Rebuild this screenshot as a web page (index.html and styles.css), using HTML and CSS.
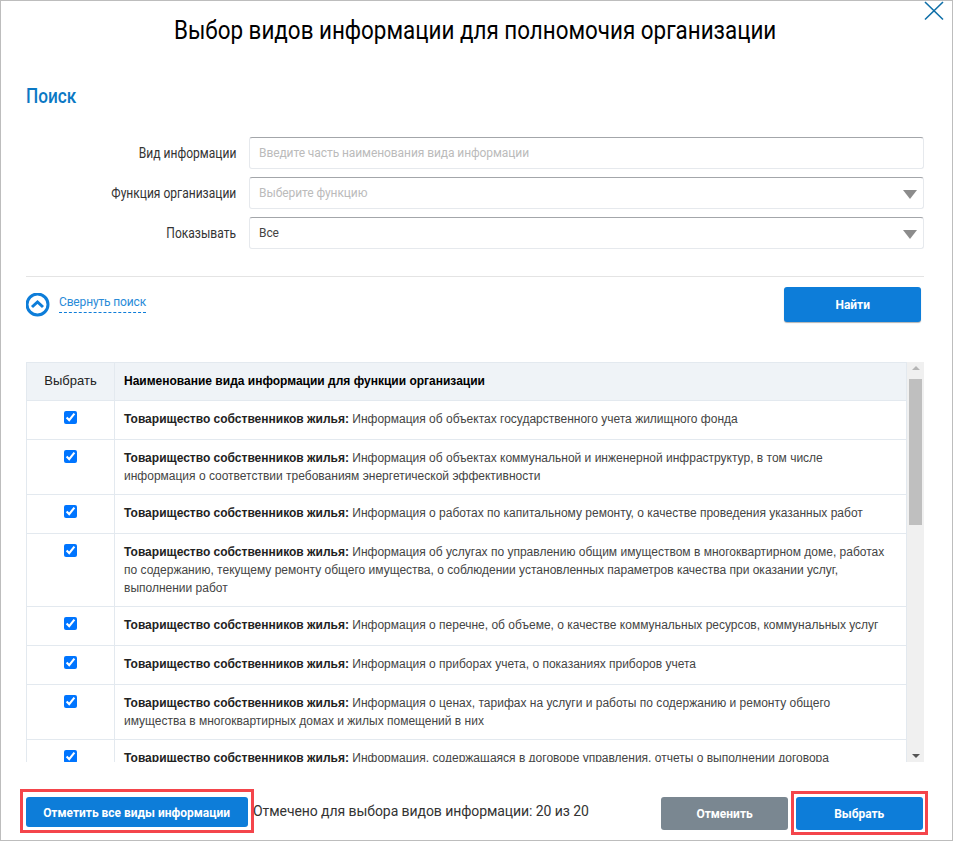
FILE: index.html
```html
<!DOCTYPE html>
<html lang="ru">
<head>
  <meta charset="UTF-8" />
  <title>Выбор видов информации</title>
  <link rel="stylesheet" href="styles.css">
</head>
<body>
  <section class="modal">
    <svg class="close" width="22" height="20" viewBox="0 0 22 20"><path d="M2 1l18 17.500M20 1L2 18.500" /></svg>
    <h1><span>Выбор видов информации для полномочия организации</span></h1>
    <h2><span>Поиск</span></h2>

    <!-- Поиск -->
    <div class="search">
      <div class="row">
        <div class="label"><span>Вид информации</span></div>
        <div class="field placeholder">Введите часть наименования вида информации</div>
      </div>
      <div class="row">
        <div class="label"><span>Функция организации</span></div>
        <div class="field placeholder">Выберите функцию<i class="arrow"></i></div>
      </div>
      <div class="row">
        <div class="label"><span>Показывать</span></div>
        <div class="field">Все<i class="arrow"></i></div>
      </div>
    </div>

    <div class="search-actions">
      <div class="toggle">
        <svg width="24" height="24" viewBox="0 0 24 24"><circle cx="11.500" cy="11.500" r="10.500" /><path d="M6 14l5.500-5 5.500 5" /></svg>
        <span class="toggle-text">Свернуть поиск</span>
      </div>
      <button class="btn btn-find"><span>Найти</span></button>
    </div>

    <!-- Таблица -->
    <div class="table-box">
      <table>
        <thead>
          <tr><th class="col-check">Выбрать</th><th>Наименование вида информации для функции организации</th></tr>
        </thead>
        <tbody>
          <tr><td class="col-check"><input type="checkbox" checked></td><td><b>Товарищество собственников жилья:</b> Информация об объектах государственного учета жилищного фонда</td></tr>
          <tr><td class="col-check"><input type="checkbox" checked></td><td><b>Товарищество собственников жилья:</b> Информация об объектах коммунальной и инженерной инфраструктур, в том числе<br>информация о соответствии требованиям энергетической эффективности</td></tr>
          <tr><td class="col-check"><input type="checkbox" checked></td><td><b>Товарищество собственников жилья:</b> Информация о работах по капитальному ремонту, о качестве проведения указанных работ</td></tr>
          <tr><td class="col-check"><input type="checkbox" checked></td><td><b>Товарищество собственников жилья:</b> Информация об услугах по управлению общим имуществом в многоквартирном доме, работах<br>по содержанию, текущему ремонту общего имущества, о соблюдении установленных параметров качества при оказании услуг,<br>выполнении работ</td></tr>
          <tr><td class="col-check"><input type="checkbox" checked></td><td><b>Товарищество собственников жилья:</b> Информация о перечне, об объеме, о качестве коммунальных ресурсов, коммунальных услуг</td></tr>
          <tr><td class="col-check"><input type="checkbox" checked></td><td><b>Товарищество собственников жилья:</b> Информация о приборах учета, о показаниях приборов учета</td></tr>
          <tr><td class="col-check"><input type="checkbox" checked></td><td><b>Товарищество собственников жилья:</b> Информация о ценах, тарифах на услуги и работы по содержанию и ремонту общего<br>имущества в многоквартирных домах и жилых помещений в них</td></tr>
          <tr><td class="col-check"><input type="checkbox" checked></td><td><b>Товарищество собственников жилья:</b> Информация, содержащаяся в договоре управления, отчеты о выполнении договора</td></tr>
        </tbody>
      </table>
      <div class="scrollbar">
        <i class="sb-up"></i>
        <div class="sb-thumb"></div>
        <i class="sb-down"></i>
      </div>
    </div>

    <!-- Низ окна -->
    <div class="bottom">
      <div class="marked marked-left"><button class="btn btn-all"><span>Отметить все виды информации</span></button></div>
      <span class="count">Отмечено для выбора видов информации: 20 из 20</span>
      <button class="btn btn-cancel"><span>Отменить</span></button>
      <div class="marked marked-right"><button class="btn btn-select"><span>Выбрать</span></button></div>
    </div>
  </section>
</body>
</html>
```

FILE: styles.css
```css
:root {
  --blue: #0d7dd9;
  --line: #e3e9ef;
}
* { box-sizing: border-box; }
body {
  margin: 0;
  font-family: Roboto, "Liberation Sans", sans-serif;
  background: #fff;
}
.modal {
  position: relative;
  width: 953px; height: 841px;
  border: 1px solid #bdbdbd;
  padding: 0 28px 0 25px;
  overflow: hidden;
}
.close {
  position: absolute; top: 0; right: 7px;
}
.close path { fill: none; stroke: #0f6fa8; stroke-width: 1.6; }

/* шрифт в макете уже обычного Roboto */
h1 span, h2 span, .label span, .btn span { display: inline-block; }
h1 {
  margin: 13px 0 0;
  font-size: 25px; line-height: 34px; font-weight: 400;
  text-align: center; color: #000;
}
h1 span { transform: scaleX(.896); white-space: nowrap; }
h2 {
  margin: 34px 0 0;
  font-size: 20px; line-height: 28px; font-weight: 500;
  color: #0b78c4;
}
h2 span { transform: scaleX(.86); transform-origin: left center; }
.search {
  margin-top: 27px;
  display: flex; flex-direction: column; gap: 8px;
  padding-bottom: 27px;
  border-bottom: 1px solid #e4e4e4;
}
.row { display: flex; align-items: center; gap: 13px; }
.label {
  width: 210px;
  text-align: right; font-size: 14px; color: #333;
}
.label span { transform: scaleX(.86); transform-origin: right center; white-space: nowrap; }
.field {
  position: relative;
  width: 675px; height: 32px;
  padding: 0 9px; line-height: 30px;
  border: 1px solid #e6e9ed; border-top: 1px solid #a3a6aa;
  border-radius: 3px;
  font-size: 12px; letter-spacing: -.08px; color: #444;
}
.placeholder { color: #bbb; }
.arrow {
  position: absolute; right: 6px; top: 12px;
  border: 6px solid transparent; border-bottom: 0;
  border-top: 9px solid #8c8c8c;
  border-left-width: 7px; border-right-width: 7px;
}
.search-actions {
  display: flex; justify-content: space-between; align-items: center;
  margin-top: 10px; padding-right: 3px;
}
.toggle { display: flex; align-items: center; gap: 9px; }
.toggle svg { fill: none; stroke: var(--blue); stroke-width: 3; }
.toggle-text {
  font-size: 12px; line-height: 15px; letter-spacing: -.15px; color: #2a8bd8;
  padding-bottom: 2px; margin-bottom: 1px;
  border-bottom: 1px dashed #0d7dd9;
}
.btn {
  border: 0; border-radius: 3px;
  background: var(--blue); color: #fff;
  font-family: inherit; font-size: 13px; font-weight: 700;
  padding: 0; flex: none;
}
.btn span { transform: scaleX(.92); white-space: nowrap; }
.btn-find { width: 137px; height: 35px; box-shadow: 0 1px 1px rgba(0,0,0,.3); }
.table-box {
  display: flex; align-items: flex-start;
  margin-top: 40px;
  width: 898px; height: 400px;
  overflow: hidden;
}
table {
  width: 881px; flex: none;
  border-collapse: collapse; table-layout: fixed;
  font-family: "Liberation Sans", sans-serif;
  font-size: 12px; line-height: 18px; color: #444;
}
th, td {
  border: 1px solid var(--line);
  padding: 9px 9px 9px 9px;
  text-align: left; vertical-align: top;
}
th { background: #eff3f7; color: #000; padding-top: 9px; padding-bottom: 10px; }
b { color: #222; }
.col-check { width: 88px; text-align: center; font-weight: 400; padding-left: 0; padding-right: 0; }
th.col-check { color: #222; font-size: 13px; }
td.col-check { padding-top: 10px; padding-bottom: 10px; }
input[type="checkbox"] { margin: 0; display: inline-block; vertical-align: top; }
.scrollbar {
  position: relative;
  width: 17px; height: 400px; flex: none;
  background: #f0f0f0;
}
.sb-thumb {
  position: absolute; left: 2px; top: 17px;
  width: 13px; height: 146px;
  background: #bfbfbf;
}
.sb-up, .sb-down {
  position: absolute; left: 5px;
  border: 4px solid transparent;
}
.sb-up { top: 4px; border-top: 0; border-bottom: 4px solid #b5b5b5; }
.sb-down { bottom: 4px; border-bottom: 0; border-top: 4px solid #555; }
.bottom {
  display: flex; align-items: flex-start;
  margin: 27px -6px 0;
}
.marked { border: 3px solid #f4454b; flex: none; }
.marked-left { padding: 5px 3px 3px; width: 234px; height: 44px; }
.marked-right { padding: 3px 2px 2px; width: 137px; height: 44px; margin: 2px 0 0 3px; }
.btn-all { width: 222px; height: 30px; }
.count {
  flex: none;
  margin: 14px 0 0 -1px; width: 408px;
  font-size: 14px; letter-spacing: -.07px; color: #333;
}
.btn-cancel { width: 127px; height: 33px; margin-top: 8px; background: #7a8791; }
.btn-select { width: 127px; height: 33px; }
```
